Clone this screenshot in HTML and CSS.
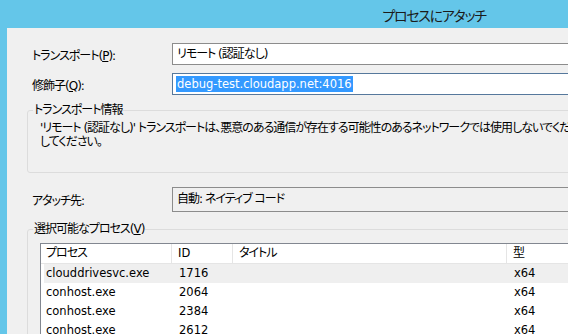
FILE: index.html
```html
<!DOCTYPE html>
<html lang="ja">
<head>
    <meta charset="UTF-8">
    <title>プロセスにアタッチ</title>
    <link rel="stylesheet" href="styles.css">
</head>
<body>
    <div class="window">
        <div class="titlebar">プロセスにアタッチ</div>
        <div class="dialog">
            <div class="field">
                <label class="field-label">トランスポート(<u>P</u>):</label>
                <div class="input">リモート (認証なし)</div>
            </div>
            <div class="field field-second">
                <label class="field-label">修飾子(<u>Q</u>):</label>
                <div class="input input-focus"><span class="selected">debug-test.cloudapp.net:4016</span></div>
            </div>

            <fieldset class="group group-info">
                <legend>トランスポート情報</legend>
                <p class="info-text">'リモート (認証なし)' トランスポートは、悪意のある通信が存在する可能性のあるネットワークでは使用しないでください。ファイアウォールで保護されたネットワークで使用<br>してください。</p>
            </fieldset>

            <div class="field field-attach">
                <label class="field-label">アタッチ先:</label>
                <div class="input input-readonly">自動: ネイティブ コード</div>
            </div>

            <fieldset class="group group-list">
                <legend>選択可能なプロセス(<u>V</u>)</legend>
                <div class="listview">
                    <div class="list-header">
                        <div class="col">プロセス</div>
                        <div class="col col-latin">ID</div>
                        <div class="col">タイトル</div>
                        <div class="col">型</div>
                    </div>
                    <div class="list-row hot">
                        <div class="cell">clouddrivesvc.exe</div>
                        <div class="cell">1716</div>
                        <div class="cell"></div>
                        <div class="cell">x64</div>
                    </div>
                    <div class="list-row">
                        <div class="cell">conhost.exe</div>
                        <div class="cell">2064</div>
                        <div class="cell"></div>
                        <div class="cell">x64</div>
                    </div>
                    <div class="list-row">
                        <div class="cell">conhost.exe</div>
                        <div class="cell">2384</div>
                        <div class="cell"></div>
                        <div class="cell">x64</div>
                    </div>
                    <div class="list-row">
                        <div class="cell">conhost.exe</div>
                        <div class="cell">2612</div>
                        <div class="cell"></div>
                        <div class="cell">x64</div>
                    </div>
                </div>
            </fieldset>
        </div>
    </div>
</body>
</html>
```

FILE: styles.css
```css
html,
body {
    margin: 0;
    padding: 0;
    height: 100%;
    overflow: hidden;
}

body {
    background-color: #64c6e9;
    font-family: "DejaVu Sans", "Noto Sans CJK JP", sans-serif;
    font-size: 12px;
    letter-spacing: -1px; /* Meiryo UI kana are narrow */
    color: #000;
    font-feature-settings: "palt";
}

.window {
    width: 868px;
}

.titlebar {
    height: 28px;
    line-height: 31px;
    text-align: center;
    font-family: "Noto Sans CJK JP", sans-serif;
    font-size: 14px;
    letter-spacing: -1.3px;
    color: #1b1b1b;
}

.dialog {
    margin-left: 7px;
    height: 306px;
    box-sizing: border-box;
    padding: 15px 0 0 20px;
    background-color: #f0f0f0;
}

/* label + box rows */
.field {
    display: flex;
    align-items: center;
}

.field-second {
    margin-top: 8px;
}

.field-attach {
    margin-top: 14px;
}

.field-label {
    width: 145px;
    flex-shrink: 0;
    box-sizing: border-box;
    padding-left: 5px;
}

.input {
    flex: 1;
    height: 22px;
    box-sizing: border-box;
    padding-left: 4px;
    line-height: 20px;
    border: 1px solid #8c8c8c;
    background-color: #fff;
    white-space: nowrap;
}

.input-focus {
    border-color: #56789c;
    padding-left: 3px;
}

.selected {
    display: inline-block;
    line-height: 16px;
    padding: 0 1px;
    font-size: 11.5px;
    letter-spacing: 0;
    background-color: #3399ff;
    color: #fff;
}

.input-readonly {
    height: 25px;
    line-height: 23px;
    background-color: #f0f0f0;
    border-color: #8c8c8c;
}

/* group boxes */
.group {
    margin: 0;
    border: 1px solid #dcdcdc;
    border-radius: 3px;
    padding: 0 0 0 12px;
}

.group legend {
    margin-left: -7px;
    padding: 0 1px;
    line-height: 15px;
}

.group-info {
    margin-top: 8px;
    padding-top: 3px;
    padding-bottom: 23px;
}

.info-text {
    margin: 0;
    line-height: 14px;
    white-space: nowrap;
}

.group-list {
    margin-top: 10px;
    padding-top: 6px;
}

/* process list */
.listview {
    border: 1px solid #828790;
    background-color: #fff;
}

.list-header {
    display: grid;
    grid-template-columns: 131px 61px 274px 1fr;
    height: 19px;
    border-bottom: 1px solid #e5e5e5;
}

.list-header .col {
    padding-left: 6px;
    line-height: 18px;
    border-right: 1px solid #e5e5e5;
}

.list-header .col:first-child {
    padding-left: 5px;
}

.list-header .col-latin {
    font-size: 11.5px;
    letter-spacing: 0;
}

.list-row {
    display: grid;
    grid-template-columns: 128px 61px 274px 1fr;
    height: 19px;
    margin-left: 3px;
    font-size: 11.5px;
    letter-spacing: 0;
}

.list-row.hot {
    background-color: #efefef;
}

.list-row .cell {
    padding-left: 7px;
    line-height: 19px;
}

.list-row .cell:first-child {
    padding-left: 2px;
}
```
